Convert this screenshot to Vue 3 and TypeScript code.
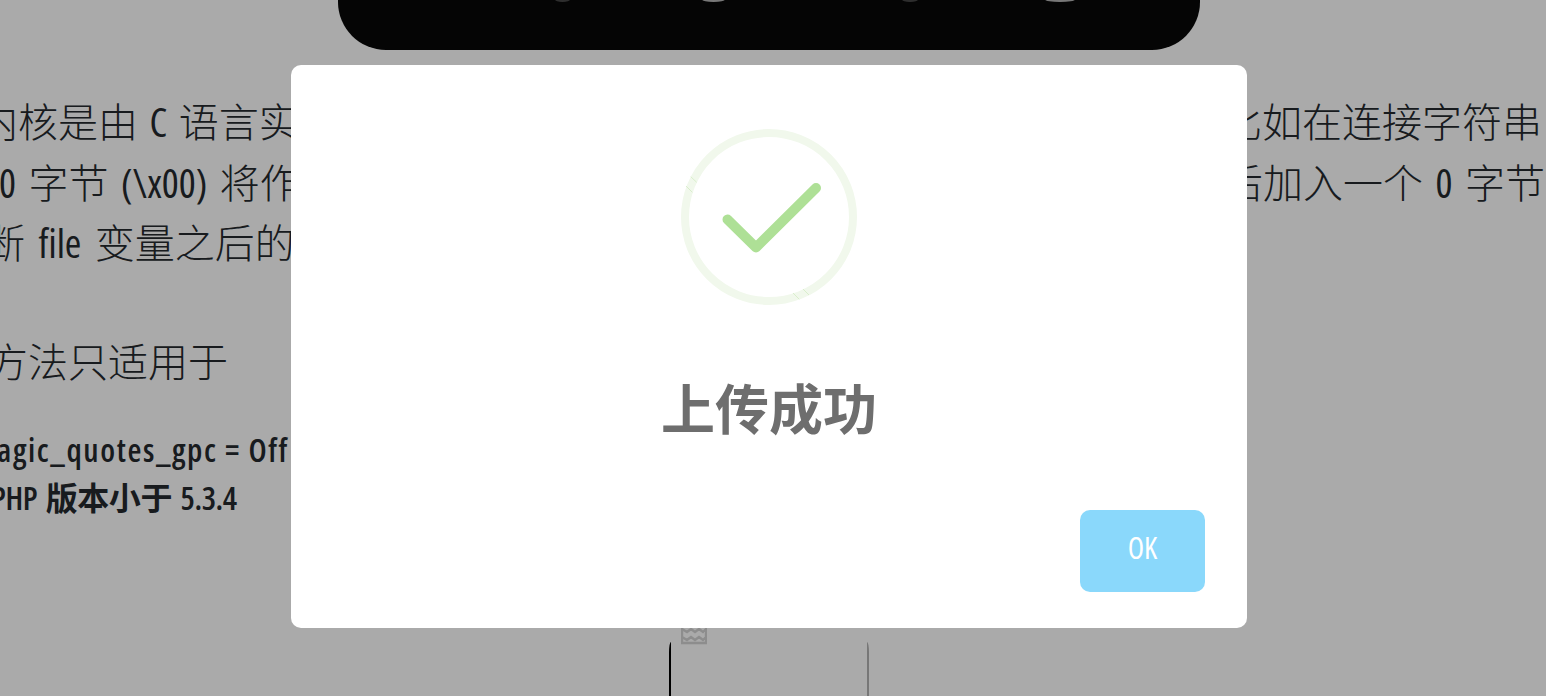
<script setup lang="ts">
const glints: { x: number; w: number; o: number }[] = [
  { x: 217, w: 15, o: 0.25 },
  { x: 364, w: 23, o: 0.7 },
  { x: 564, w: 16, o: 0.25 },
  { x: 707, w: 30, o: 0.7 },
]
</script>

<template>
  <div class="page">
    <div class="code">
      <span
        v-for="g in glints"
        :key="g.x"
        class="glint"
        :style="{ left: g.x + 'px', width: g.w + 'px', opacity: g.o }"
      ></span>
    </div>

    <div class="article">
      <p class="line cut-a">
        <span>内核是由 <b class="lat">C</b> 语言实</span>
        <span>比如在连接字符串</span>
      </p>
      <p class="line cut-b">
        <span><b class="lat">0</b> 字节 <b class="lat">(\x00)</b> 将作</span>
        <span>后加入一个 <b class="lat">0</b> 字节</span>
      </p>
      <p class="line cut-c">
        <span>断 <b class="lat">file</b> 变量之后的</span>
      </p>
      <p class="line lead">方法只适用于</p>
      <ul class="reqs">
        <li class="req-a">magic_quotes_gpc = Off</li>
        <li class="req-b">PHP 版本小于 5.3.4</li>
      </ul>
    </div>

    <div class="figure">
      <svg class="broken" viewBox="0 0 26 18" width="26" height="18" aria-hidden="true">
        <path
          d="M1 0v16h24V0M1 2l5 3 4-3 4 3 4-3 4 3 3-3M1 10l5 3 4-3 4 3 4-3 4 3 3-3"
          fill="none"
          stroke="#d4d4d4"
          stroke-width="2.4"
        />
      </svg>
    </div>

    <div class="overlay">
      <div class="modal" role="dialog">
        <svg class="icon" viewBox="0 0 176 176" width="176" height="176" aria-hidden="true">
          <circle cx="88" cy="88" r="84" fill="none" stroke="#f1f8ec" stroke-width="8" />
          <path
            d="M9.7 47.7l6 5.6M5 57l6.300 6.300M112 164l6.300 6.300M122 160l6 6"
            fill="none"
            stroke="#cfeabf"
            stroke-width="0.7"
          />
          <path
            d="M46.500 90.500l28.500 28L135 59"
            fill="none"
            stroke="#aee096"
            stroke-width="10"
            stroke-linecap="round"
            stroke-linejoin="round"
          />
        </svg>
        <h2 class="title">上传成功</h2>
        <div class="actions">
          <button class="ok" type="button">OK</button>
        </div>
      </div>
    </div>
  </div>
</template>

<style>
html,
body {
  margin: 0;
  background: #fff;
  overflow: hidden;
}
</style>

<style scoped>
.page {
  position: relative;
  width: 1546px;
  height: 696px;
  overflow: hidden;
  background: #fff;
  color: #24292e;
  font-family: "Open Sans", "Noto Sans CJK SC", sans-serif;
  font-stretch: 75%;
}

.code {
  position: relative;
  width: 862px;
  height: 50px;
  margin-left: 338px;
  background: #080808;
  border-radius: 0 0 48px 48px;
}

.glint {
  position: absolute;
  top: -3px;
  height: 5px;
  border-radius: 50%;
  background: #fff;
  filter: blur(0.6px);
}

.article {
  width: 1538px;
  padding-top: 42px;
}

.line {
  display: flex;
  justify-content: space-between;
  margin: 0;
  height: 60.5px;
  line-height: 60.5px;
  font-size: 40px;
  font-weight: 300;
  word-spacing: 5px;
  white-space: nowrap;
}

.lat {
  font-weight: 400;
}

.cut-a {
  margin-left: -22px;
  margin-right: -4px;
  word-spacing: 4px;
}

.cut-b {
  margin-left: -1px;
  margin-right: -7px;
}

.cut-c {
  margin-left: -15px;
  word-spacing: 6px;
}

.lead {
  margin: 58px 0 0 -12px;
}

.reqs {
  list-style: none;
  margin: 34px 0 0;
  padding: 0;
  font-size: 32px;
  line-height: 47.5px;
  font-weight: 600;
  white-space: nowrap;
}

.req-a {
  margin-left: -27px;
  letter-spacing: 1.6px;
}

.req-b {
  margin-left: -9px;
  letter-spacing: -0.4px;
  word-spacing: 3px;
}

.figure {
  position: absolute;
  left: 669px;
  top: 642px;
  box-sizing: border-box;
  width: 200px;
  height: 80px;
  border-left: 2px solid #000;
  border-right: 2px solid #b3b3b3;
  border-radius: 2px 2px 0 0 / 10px 10px 0 0;
}

.broken {
  position: absolute;
  left: 10px;
  top: -15px;
  filter: blur(0.5px);
}

.overlay {
  position: absolute;
  inset: 0;
  background: rgba(0, 0, 0, 0.335);
}

.modal {
  position: absolute;
  left: 291px;
  top: 65px;
  box-sizing: border-box;
  display: flex;
  flex-direction: column;
  align-items: center;
  width: 956px;
  height: 563px;
  padding-top: 64px;
  background: #fff;
  border-radius: 10px;
}

.title {
  margin: 62px 0 0;
  font-family: "Noto Sans CJK SC", sans-serif;
  font-size: 54px;
  font-weight: 700;
  line-height: 80px;
  color: #6e6e6e;
}

.actions {
  margin-top: auto;
  align-self: stretch;
  display: flex;
  justify-content: flex-end;
  padding: 0 42px 36px;
}

.ok {
  width: 125px;
  height: 82px;
  padding: 0 0 8px;
  border: 0;
  border-radius: 10px;
  background: #8ad8fb;
  color: #fff;
  font-family: "Open Sans", sans-serif;
  font-stretch: 75%;
  font-size: 30px;
  font-weight: 500;
}
</style>
